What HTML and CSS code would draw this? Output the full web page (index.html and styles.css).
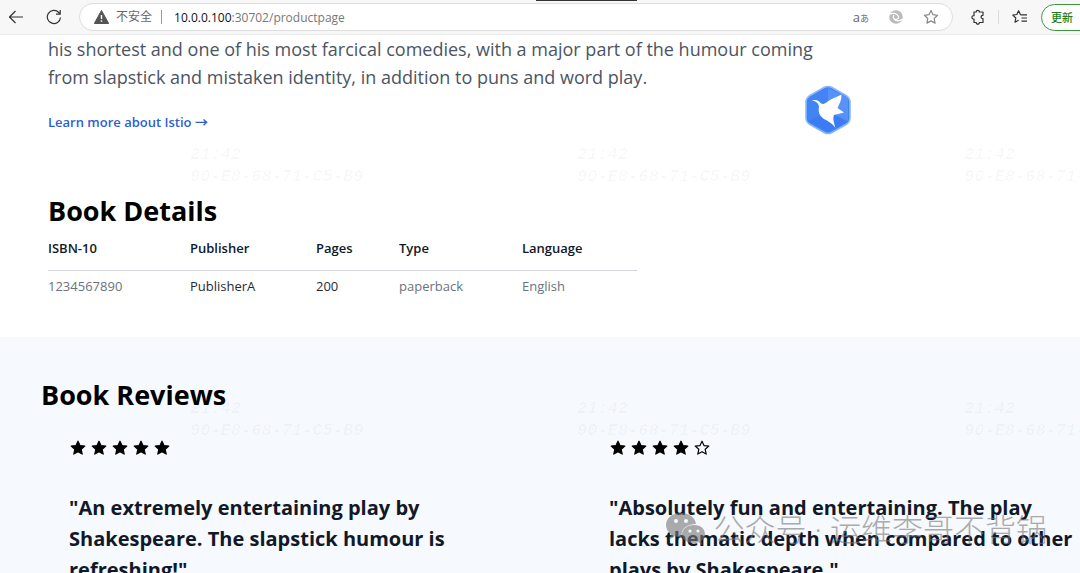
FILE: index.html
```html
<!DOCTYPE html>
<html lang="en">
<head>
    <meta charset="UTF-8">
    <meta name="viewport" content="width=device-width, initial-scale=1.0">
    <title>Simple Bookstore App</title>
    <link rel="stylesheet" href="styles.css">
</head>
<body>
    <svg class="defs" aria-hidden="true">
        <symbol id="star" viewBox="0 0 16 16">
            <path d="M8 1.200l2 4.400 4.800.5-3.600 3.200 1 4.800L8 11.700l-4.200 2.400 1-4.800L1.200 6.100 6 5.600z" stroke="currentColor" stroke-width="1.200" stroke-linejoin="round"/>
        </symbol>
    </svg>

    <div class="toolbar">
        <button class="icon-btn" aria-label="Back">
            <svg width="16" height="16" viewBox="0 0 16 16"><path d="M15 8H1.500M7.500 2L1.500 8l6 6"/></svg>
        </button>
        <button class="icon-btn reload" aria-label="Reload">
            <svg width="16" height="16" viewBox="0 0 16 16"><path d="M14.500 8.500A6.600 6.600 0 1 1 12.800 3.500L14 5M14.200 1v4.200H10"/></svg>
        </button>
        <div class="address">
            <svg class="warn" width="15" height="14" viewBox="0 0 15 14"><path d="M7.500.5L14.700 13.500H.3z" fill="#555" stroke="#555" stroke-linejoin="round"/><path d="M7.500 5v4M7.500 10.300v1.500" stroke="#fff" stroke-width="1.400"/></svg>
            <span class="insecure">不安全</span>
            <span class="url"><b>10.0.0.100</b>:30702/productpage</span>
            <button class="read" aria-label="Translate">a<small>あ</small></button>
            <button class="icon-btn" aria-label="Sync">
                <svg width="14" height="14" viewBox="0 0 14 14"><circle cx="7" cy="7" r="6.800" class="disc"/><path class="swirl" d="M0 4.500C4 2.500 8 3 9.500 6.500M9.800 6.500C9.800 9 7.500 10 5.500 9C4 8 4 6 5 5M5 9C6.500 11.500 10 11.500 14 9"/></svg>
            </button>
            <button class="icon-btn fav" aria-label="Add to favorites">
                <svg width="16" height="16" viewBox="0 0 16 16"><path d="M8 1.500l2 4.200 4.600.6-3.400 3.200.9 4.600L8 11.900l-4.100 2.200.9-4.600L1.400 6.300 6 5.700z"/></svg>
            </button>
        </div>
        <button class="icon-btn ext" aria-label="Extensions">
            <svg width="16" height="16" viewBox="0 0 16 16"><path d="M4 3h2.300C6 .9 9.600.9 9.300 3H13V6.300C10.500 6 10.500 9.900 13 9.600V13.500H9.300C9.600 15.600 6 15.600 6.300 13.500H4V10C1.200 10.400 1.200 6.300 4 6.700z"/></svg>
        </button>
        <span class="divider"></span>
        <button class="icon-btn collections" aria-label="Favorites">
            <svg width="16" height="16" viewBox="0 0 16 16"><path d="M8.500 5.800H15M9.500 9H15M9.500 12.200H15M8.500 5.800L6.600 1.800 4.800 5.500.8 6.100l3 2.900-.8 4.200 3.600-2"/></svg>
        </button>
        <button class="update">更新</button>
    </div>
    <span class="tab-strip"></span>

    <main>
        <section class="summary">
            <p>his shortest and one of his most farcical comedies, with a major part of the humour coming from slapstick and mistaken identity, in addition to puns and word play.</p>
            <a href="#">Learn more about Istio →</a>
        </section>

        <section class="details">
            <h2>Book Details</h2>
            <table>
                <thead>
                    <tr>
                        <th class="isbn">ISBN-10</th>
                        <th class="publisher">Publisher</th>
                        <th class="pages">Pages</th>
                        <th class="type">Type</th>
                        <th class="language">Language</th>
                    </tr>
                </thead>
                <tbody>
                    <tr>
                        <td>1234567890</td>
                        <td class="strong">PublisherA</td>
                        <td class="strong">200</td>
                        <td>paperback</td>
                        <td>English</td>
                    </tr>
                </tbody>
            </table>
        </section>

        <section class="reviews">
            <h2>Book Reviews</h2>
            <div class="review-grid">
                <div class="review">
                    <div class="stars">
                        <svg><use href="#star"/></svg>
                        <svg><use href="#star"/></svg>
                        <svg><use href="#star"/></svg>
                        <svg><use href="#star"/></svg>
                        <svg><use href="#star"/></svg>
                    </div>
                    <blockquote>"An extremely entertaining play by Shakespeare. The slapstick humour is refreshing!"</blockquote>
                </div>
                <div class="review">
                    <div class="stars">
                        <svg><use href="#star"/></svg>
                        <svg><use href="#star"/></svg>
                        <svg><use href="#star"/></svg>
                        <svg><use href="#star"/></svg>
                        <svg class="empty"><use href="#star"/></svg>
                    </div>
                    <blockquote>"Absolutely fun and entertaining. The play lacks thematic depth when compared to other plays by Shakespeare."</blockquote>
                </div>
            </div>
        </section>
    </main>

    <!-- desktop watermark -->
    <div class="watermark">
        <span>21:42<br>90-E8-68-71-C5-B9</span>
        <span>21:42<br>90-E8-68-71-C5-B9</span>
        <span>21:42<br>90-E8-68-71-C5-B9</span>
        <span>21:42<br>90-E8-68-71-C5-B9</span>
        <span>21:42<br>90-E8-68-71-C5-B9</span>
        <span>21:42<br>90-E8-68-71-C5-B9</span>
    </div>

    <!-- floating assistant -->
    <svg class="bird" viewBox="0 0 46 50">
        <path d="M19 2.500Q23 .3 27 2.500L41 10.500Q45 13 45 17V33Q45 37 41 39.500L27 47.500Q23 49.700 19 47.500L5 39.500Q1 37 1 33V17Q1 13 5 10.500z" fill="#4384f5" stroke="#8ab8fb" stroke-width="1.500"/>
        <path d="M23 3L43 13V36L23 26z" fill="#6b9ffb" opacity=".5"/>
        <path d="M3 36L23 26 42 37 23 47z" fill="#2f6df0" opacity=".4"/>
        <path d="M7 15.500C11 14.300 14 15.500 16 18.500C19 19.500 20 18.500 22 17C27 13 32 12 36.500 9.500C36.500 15 35 18 32.500 23L39 27.500 29 30C27.500 33 29 38 30.500 43C27 38 23 36 19 34C14.500 31 13 27 14 21C13 17.500 10.500 16 7 15.500z" fill="#fff"/>
    </svg>

    <div class="account">
        <svg width="42" height="34" viewBox="0 0 42 34">
            <path d="M16 1C7 1 1 6.500 1 13c0 4 2 7 5 9l-1 5 5-3c2 1 5 1 7 1-2-8 5-13 14-13C30 5 24 1 16 1z"/>
            <path d="M29 13c-7 0-12 4-12 9.500S22 31 29 31c1.500 0 3 0 4-1l4 3-1-4c3-2 4-4 4-6.500C40 17 36 13 29 13z"/>
            <g class="eyes"><circle cx="11" cy="9" r="2"/><circle cx="21" cy="9" r="2"/><circle cx="25" cy="19" r="1.600"/><circle cx="33" cy="19" r="1.600"/></g>
        </svg>
        <span>公众号 · 运维李哥不背锅</span>
    </div>
</body>
</html>
```
FILE: styles.css
```css
* {
    box-sizing: border-box;
}
body {
    margin: 0;
    height: 100vh;
    display: flex;
    flex-direction: column;
    overflow: hidden;
    position: relative;
    background: white;
    color: #111827;
    font-family: "Open Sans", "Noto Sans CJK SC", sans-serif;
}
button {
    border: 0;
    padding: 0;
    background: none;
    font-family: inherit;
}
h2, p, blockquote {
    margin: 0;
}
.defs {
    position: absolute;
    width: 0;
    height: 0;
}

/* browser toolbar */
.toolbar {
    flex: none;
    display: flex;
    align-items: center;
    height: 35px;
    padding-left: 8px;
    background: #f7f7f7;
    border-bottom: 1px solid #ebebeb;
    overflow: hidden;
}
.icon-btn {
    display: flex;
    flex: none;
}
.icon-btn svg {
    fill: none;
    stroke: #333;
    stroke-width: 1.2;
    stroke-linejoin: round;
}
.reload {
    margin-left: 22px;
}
.address {
    flex: 1;
    display: flex;
    align-items: center;
    height: 28px;
    margin-left: 17px;
    padding: 0 13px 0 14px;
    border: 1px solid #ddd;
    border-radius: 14px;
    background: white;
    color: #666;
    font-size: 12px;
}
.insecure {
    margin-left: 7px;
    padding-right: 9px;
    margin-right: 12px;
    border-right: 1px solid #999;
    line-height: 14px;
}
.url {
    flex: 1;
    color: #777;
}
.url b {
    color: #111;
    font-weight: 400;
}
.read {
    margin-right: 20px;
    color: #666;
    font-size: 13px;
}
.read small {
    font-size: 9px;
}
.address .disc {
    fill: #bbb;
    stroke: none;
}
.address .swirl {
    stroke: white;
}
.fav {
    margin-left: 20px;
}
.fav svg {
    stroke: #888;
}
.ext {
    margin-left: 17px;
}
.divider {
    width: 1px;
    height: 14px;
    margin: 0 13px 0 12px;
    background: #ddd;
}
.update {
    flex: none;
    width: 60px;
    height: 27px;
    margin: 0 -21px 0 13px;
    padding-left: 9px;
    border: 1px solid #3c963c;
    border-radius: 14px;
    background: white;
    color: #1e7e1e;
    font-size: 11px;
    font-weight: 500;
    text-align: left;
}
.tab-strip {
    position: absolute;
    top: 0;
    left: 536px;
    width: 101px;
    height: 1px;
    background: #333;
}

/* product page */
main {
    flex: 1;
    display: flex;
    flex-direction: column;
    min-height: 0;
}
.summary {
    padding: 0 48px;
}
.summary p {
    max-width: 780px;
    color: #4b5563;
    font-size: 18px;
    line-height: 28px;
}
.summary a {
    display: block;
    margin-top: 19px;
    color: #2f5fd0;
    font-size: 13px;
    font-weight: 600;
    line-height: 24px;
    text-decoration: none;
}
.details {
    padding: 59px 48px 35px;
}
h2 {
    color: black;
    font-size: 27px;
    font-weight: 700;
    line-height: 36px;
}
table {
    border-collapse: collapse;
    table-layout: fixed;
    width: 589px;
    font-size: 13px;
    line-height: 20px;
}
th, td {
    padding: 0;
    text-align: left;
}
th {
    height: 41px;
    padding: 9px 0 12px;
    border-bottom: 1px solid #d1d5db;
    font-weight: 600;
}
td {
    padding: 5px 0 6px;
    color: #6b7280;
}
td.strong {
    color: #1f2937;
}
.isbn {
    width: 142px;
}
.publisher {
    width: 126px;
}
.pages {
    width: 83px;
}
.type {
    width: 123px;
}
.language {
    width: 115px;
}

.reviews {
    flex: 1;
    min-height: 0;
    padding-top: 40px;
    background: #f6f9fe;
}
.reviews h2 {
    padding-left: 41px;
}
.review-grid {
    display: grid;
    grid-template-columns: 1fr 1fr;
    margin-top: 27px;
}
.review {
    padding-left: 69px;
}
.stars {
    display: flex;
    gap: 5px;
    padding-left: 1px;
}
.stars svg {
    width: 16px;
    height: 16px;
    color: black;
    fill: black;
}
.stars .empty {
    fill: none;
}
blockquote {
    margin-top: 36px;
    font-size: 20px;
    font-weight: 700;
    line-height: 31px;
}

/* overlays */
.watermark {
    position: absolute;
    top: 144px;
    left: 190px;
    right: 0;
    display: grid;
    grid-template-columns: repeat(3, 387px);
    row-gap: 210px;
    overflow: hidden;
    color: rgba(0, 0, 0, 0.03);
    font: italic bold 17px/22px "Liberation Mono", monospace;
    pointer-events: none;
}
.bird {
    position: absolute;
    top: 85px;
    left: 805px;
    width: 46px;
    height: 50px;
}
.account {
    position: absolute;
    right: 33px;
    bottom: 24px;
    display: flex;
    align-items: center;
    gap: 7px;
    color: #777;
    font-family: "Open Sans", "Noto Sans CJK SC", sans-serif;
    font-size: 31px;
    font-weight: 300;
    line-height: 40px;
    opacity: 0.6;
    pointer-events: none;
}
.account svg {
    fill: #777;
}
.account .eyes {
    fill: #f6f9fe;
}
```
